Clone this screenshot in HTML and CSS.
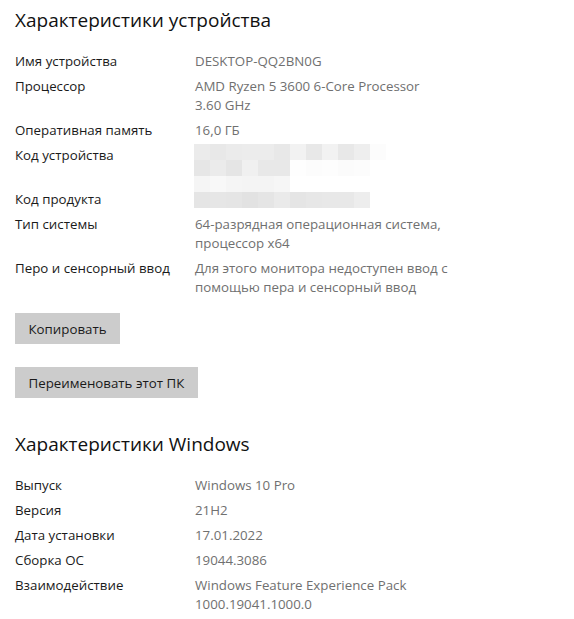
FILE: index.html
```html
<!DOCTYPE html>
<html lang="ru">
<head>
<meta charset="utf-8">
<title>О программе</title>
<link rel="stylesheet" href="styles.css">
</head>
<body>
<main class="page">
  <h2 class="title">Характеристики устройства</h2>
  <dl class="specs">
    <div class="row"><dt>Имя устройства</dt><dd>DESKTOP-QQ2BN0G</dd></div>
    <div class="row"><dt>Процессор</dt><dd>AMD Ryzen 5 3600 6-Core Processor<br>3.60 GHz</dd></div>
    <div class="row"><dt>Оперативная память</dt><dd>16,0 ГБ</dd></div>
    <div class="row"><dt>Код устройства</dt><dd class="hidden two">
      <div class="mosaic m1">
        <span style="background:#ebebeb"></span><span style="background:#e8e8e8"></span><span style="background:#ebebeb"></span><span style="background:#ececec"></span><span style="background:#ececec"></span><span style="background:#e8e8e8"></span><span style="background:#f2f2f2"></span><span style="background:#e8e8e8"></span><span style="background:#f2f2f2"></span><span style="background:#e8e8e8"></span><span style="background:#eeeeee"></span><span style="background:#fcfcfc"></span>
        <span style="background:#e6e6e6"></span><span style="background:#ebebeb"></span><span style="background:#e5e5e5"></span><span style="background:#f0f0f0"></span><span style="background:#e8e8e8"></span><span style="background:#e8e8e8"></span><span style="background:#fefefe"></span><span style="background:#fcfcfc"></span><span style="background:#fdfdfd"></span><span style="background:#fbfbfb"></span><span style="background:#fcfcfc"></span><span></span>
        <span style="background:#f5f5f5"></span><span style="background:#f8f8f8"></span><span style="background:#f5f5f5"></span><span style="background:#f4f4f4"></span><span style="background:#f4f4f4"></span><span style="background:#f6f6f6"></span>
      </div>
    </dd></div>
    <div class="row"><dt>Код продукта</dt><dd class="hidden">
      <div class="mosaic m2">
        <span style="background:#e5e5e5"></span><span style="background:#e6e6e6"></span><span style="background:#e5e5e5"></span><span style="background:#e2e2e2"></span><span style="background:#e5e5e5"></span><span style="background:#eaeaea"></span><span style="background:#e5e5e5"></span><span style="background:#e7e7e7"></span><span style="background:#e8e8e8"></span><span style="background:#e8e8e8"></span><span style="background:#ededed"></span>
      </div>
    </dd></div>
    <div class="row"><dt>Тип системы</dt><dd>64-разрядная операционная система,<br>процессор x64</dd></div>
    <div class="row"><dt>Перо и сенсорный ввод</dt><dd>Для этого монитора недоступен ввод с<br>помощью пера и сенсорный ввод</dd></div>
  </dl>
  <div class="actions">
    <button class="btn" type="button">Копировать</button>
    <button class="btn" type="button">Переименовать этот ПК</button>
  </div>
  <h2 class="title title-win">Характеристики Windows</h2>
  <dl class="specs">
    <div class="row"><dt>Выпуск</dt><dd>Windows 10 Pro</dd></div>
    <div class="row"><dt>Версия</dt><dd>21H2</dd></div>
    <div class="row"><dt>Дата установки</dt><dd>17.01.2022</dd></div>
    <div class="row"><dt>Сборка ОС</dt><dd>19044.3086</dd></div>
    <div class="row"><dt>Взаимодействие</dt><dd>Windows Feature Experience Pack<br>1000.19041.1000.0</dd></div>
  </dl>
</main>
</body>
</html>
```

FILE: styles.css
```css
html, body {
  margin: 0;
  padding: 0;
  background: #ffffff;
}

body {
  font-family: "Open Sans", "Noto Sans", "Liberation Sans", sans-serif;
  color: #000000;
}

.page {
  display: flex;
  flex-direction: column;
  align-items: flex-start;
  padding: 6px 0 0 15px;
}

.title {
  margin: 0;
  font-size: 19px;
  line-height: 28px;
  font-weight: 400;
  color: #111111;
}

.title-win {
  margin-top: 32px;
}

.specs {
  margin: 18px 0 0;
  display: flex;
  flex-direction: column;
  gap: 6px;
  width: 100%;
}

.row {
  display: grid;
  grid-template-columns: 180px 1fr;
  font-size: 13.3px;
  line-height: 19px;
}

.row dt {
  margin: 0;
  color: #1a1a1a;
}

.row dd {
  margin: 0;
  color: #707070;
}

.hidden {
  position: relative;
  height: 19px;
}

.hidden.two {
  height: 38px;
}

.mosaic {
  position: absolute;
  left: -1px;
  display: grid;
  grid-template-columns: repeat(12, 16px);
  grid-auto-rows: 16px;
}

.m1 {
  top: -2.5px;
}

.m2 {
  top: 1.5px;
}

.actions {
  display: flex;
  flex-direction: column;
  align-items: flex-start;
  gap: 23px;
  margin-top: 16px;
}

.btn {
  height: 31px;
  padding: 0 13.5px;
  border: 0;
  background: #cccccc;
  font-family: inherit;
  font-size: 13.3px;
  color: #1a1a1a;
}
```
